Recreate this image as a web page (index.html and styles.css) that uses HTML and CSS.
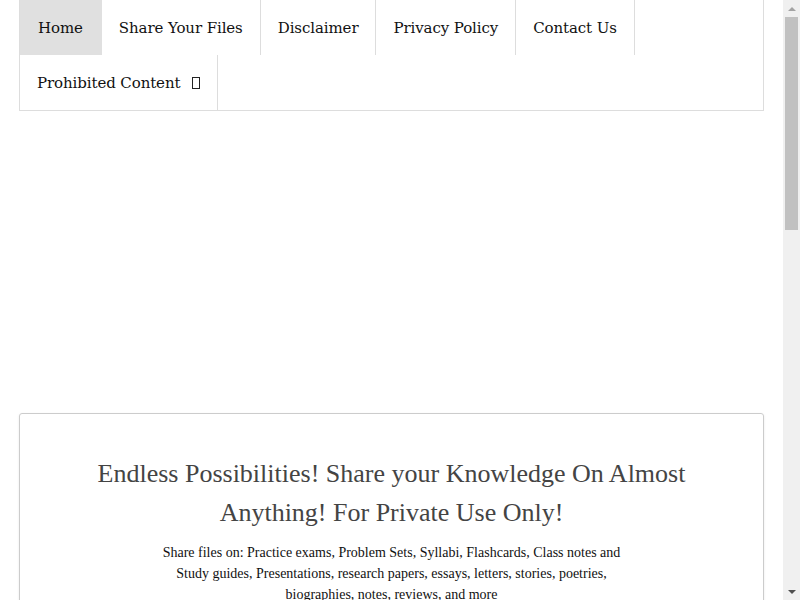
FILE: index.html
```html
<!DOCTYPE html>
<html lang="en">
<head>
    <meta charset="UTF-8">
    <meta name="viewport" content="width=device-width, initial-scale=1.0">
    <title>Share Your Files</title>
    <link rel="stylesheet" href="styles.css">
</head>
<body>
    <div class="page">
        <nav class="menu">
            <a class="menu-item active" href="#">Home</a>
            <a class="menu-item" href="#">Share Your Files</a>
            <a class="menu-item" href="#">Disclaimer</a>
            <a class="menu-item" href="#">Privacy Policy</a>
            <a class="menu-item" href="#">Contact Us</a>
            <a class="menu-item" href="#">Prohibited Content <span class="caret"></span></a>
        </nav>

        <div class="banner-space"></div>

        <div class="card">
            <h2>Endless Possibilities! Share your Knowledge On Almost Anything! For Private Use Only!</h2>
            <p>Share files on: Practice exams, Problem Sets, Syllabi, Flashcards, Class notes and Study guides, Presentations, research papers, essays, letters, stories, poetries, biographies, notes, reviews, and more</p>
        </div>
    </div>

    <!-- window scrollbar -->
    <div class="scrollbar">
        <span class="arrow up"></span>
        <span class="thumb"></span>
        <span class="track"></span>
        <span class="arrow down"></span>
    </div>
</body>
</html>
```

FILE: styles.css
```css
body {
    margin: 0;
    background: #fff;
    font-family: "Liberation Serif", serif;
    display: flex;
    align-items: flex-start;
}

.page {
    flex: 1;
    padding: 0 19px 40px;
}

.menu {
    display: flex;
    flex-wrap: wrap;
    border: 1px solid #ddd;
    border-top: none;
}

.menu-item {
    display: flex;
    align-items: center;
    height: 55px;
    padding: 1px 17px 0;
    box-sizing: border-box;
    border-right: 1px solid #ddd;
    color: #111;
    text-decoration: none;
    font-family: "DejaVu Serif", Georgia, serif;
    font-size: 15px;
    letter-spacing: -0.1px;
}

.menu-item.active {
    background: #e0e0e0;
    border-right-color: #e0e0e0;
    padding: 1px 18px 0;
}

.caret {
    display: inline-block;
    width: 6px;
    height: 10px;
    border: 1px solid #222;
    margin-left: 12px;
}

.banner-space {
    height: 302px;
}

.card {
    border: 1px solid #ccc;
    border-radius: 3px;
    box-shadow: 0 1px 3px rgba(0, 0, 0, 0.08);
    padding: 40px 20px 300px;
    text-align: center;
}

.card h2 {
    max-width: 610px;
    margin: 0 auto 10px;
    font-weight: normal;
    font-size: 26px;
    line-height: 39px;
    color: #444;
}

.card p {
    max-width: 470px;
    margin: 0 auto;
    font-size: 14px;
    line-height: 21px;
    color: #111;
}

.scrollbar {
    position: sticky;
    top: 0;
    width: 17px;
    height: 100vh;
    flex-shrink: 0;
    background: #f0f0f0;
    display: flex;
    flex-direction: column;
    align-items: center;
}

.arrow {
    height: 17px;
    display: flex;
    align-items: center;
    justify-content: center;
}

.arrow::before {
    content: "";
    border-left: 4px solid transparent;
    border-right: 4px solid transparent;
}

.arrow.up::before {
    border-bottom: 4px solid #a3a3a3;
}

.arrow.down::before {
    border-top: 4px solid #505050;
}

.thumb {
    width: 13px;
    height: 213px;
    background: #c1c1c1;
}

.track {
    flex: 1;
}
```
